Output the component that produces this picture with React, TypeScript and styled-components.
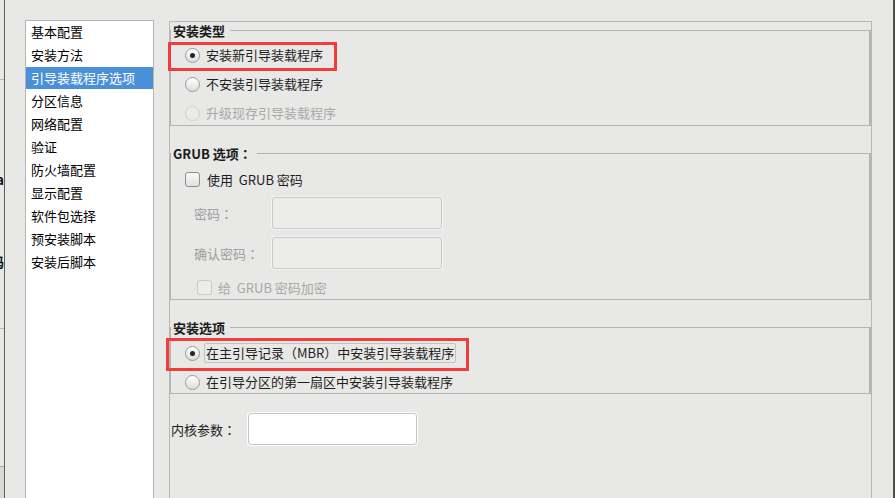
import React from "react";
import styled, { createGlobalStyle, css } from "styled-components";

type Mark = { left: number; top: number; width: number; height: number };

const GlobalStyle = createGlobalStyle`
  html, body {
    margin: 0;
    padding: 0;
  }
  body {
    background: #e8e8e7;
    font-family: "Noto Sans CJK SC", "DejaVu Sans", sans-serif;
    font-size: 13px;
    color: #1e1e1e;
    overflow: hidden;
  }
`;

const Page = styled.div`
  display: flex;
  width: 895px;
  height: 498px;
  box-sizing: border-box;
  border-right: 2px solid #4f4f4f;
  background: #e8e8e7;
`;

/* sliver of the window behind, at the far left */
const Strip = styled.div`
  width: 4px;
  flex: none;
  border-right: 1px solid #5e5e5e;
  overflow: hidden;
  display: flex;
  flex-direction: column;
`;

const StripRule = styled.div<{ $top: number }>`
  margin-top: ${(p) => p.$top}px;
  border-top: 1px solid #b9b9b9;
`;

const StripGlyph = styled.div<{ $top: number }>`
  margin-top: ${(p) => p.$top}px;
  height: 14px;
  line-height: 14px;
  display: flex;
  justify-content: flex-end;
  font-weight: bold;
  color: #111;
  white-space: nowrap;
`;

const StripBlock = styled.div<{ $top: number }>`
  margin-top: ${(p) => p.$top}px;
  flex: 1;
  background: #d9d9d8;
  border-top: 1px solid #aaaaaa;
`;

const NavList = styled.ul`
  list-style: none;
  margin: 20px 0 0 20px;
  padding: 0;
  width: 129px;
  flex: none;
  box-sizing: border-box;
  background: #fff;
  border: 1px solid #b4b4b4;
  border-bottom: none;
  color: #000;
`;

const NavItem = styled.li<{ $active?: boolean }>`
  height: 22px;
  line-height: 22px;
  margin-bottom: 1px;
  padding-left: 5px;
  white-space: nowrap;
  ${(p) =>
    p.$active &&
    css`
      background: #4a90d9;
      color: #fff;
    `}
`;

const Main = styled.main`
  flex: 1;
  min-width: 0;
  display: flex;
  flex-direction: column;
`;

const Viewport = styled.div`
  flex: 1;
  margin: 21px 21px 0 15px;
  border: 1px solid #b8b8b8;
  border-bottom: none;
  display: flex;
  flex-direction: column;
`;

const Group = styled.fieldset<{ $gap?: number }>`
  margin: ${(p) => p.$gap ?? 0}px 0 0;
  padding: 0;
  min-inline-size: 0;
  border: 1px solid #b3b3b3;
  border-right-width: 2px;
`;

const GroupTitle = styled.legend`
  padding: 0 5px 0 2px;
  font-weight: bold;
  line-height: 17px;
  color: #1a1a1a;
  white-space: nowrap;
`;

const GroupBody = styled.div<{ $top: number; $bottom: number; $gap: number }>`
  display: flex;
  flex-direction: column;
  align-items: flex-start;
  gap: ${(p) => p.$gap}px;
  padding: ${(p) => p.$top}px 0 ${(p) => p.$bottom}px 14px;
`;

/* full-width colon, centred in its cell as the reference draws it */
const Colon = styled.span`
  font-family: "Noto Sans CJK TC", "Noto Sans CJK SC", sans-serif;
`;

const Option = styled.div<{ $disabled?: boolean; $mark?: Mark }>`
  position: relative;
  display: flex;
  align-items: center;
  height: 20px;
  white-space: nowrap;
  color: ${(p) => (p.$disabled ? "#a8a8a8" : "#1e1e1e")};
  ${(p) =>
    p.$mark &&
    css`
      &::after {
        content: "";
        position: absolute;
        left: ${p.$mark.left}px;
        top: ${p.$mark.top}px;
        width: ${p.$mark.width}px;
        height: ${p.$mark.height}px;
        box-sizing: border-box;
        border: 3px solid #f03c3c;
        pointer-events: none;
      }
    `}
`;

const RadioDot = styled.span<{ $checked?: boolean; $disabled?: boolean }>`
  width: 15px;
  height: 15px;
  flex: none;
  box-sizing: border-box;
  border-radius: 50%;
  border: 1px solid ${(p) => (p.$disabled ? "#d0d0d0" : "#9a9a9a")};
  background: ${(p) =>
    p.$disabled ? "#ebebea" : "linear-gradient(#ffffff, #dcdcdc)"};
  display: flex;
  align-items: center;
  justify-content: center;
  &::after {
    content: "";
    width: 5px;
    height: 5px;
    border-radius: 50%;
    background: #262626;
    display: ${(p) => (p.$checked ? "block" : "none")};
  }
`;

const OptionText = styled.span<{ $focus?: boolean }>`
  margin-left: 6px;
  line-height: 18px;
  ${(p) =>
    p.$focus &&
    css`
      margin-left: 4px;
      padding: 0 1px;
      border: 1px solid #c2c2c2;
      border-radius: 2px;
    `}
`;

const CheckRow = styled.div<{ $disabled?: boolean; $indent?: number }>`
  display: flex;
  align-items: center;
  height: 20px;
  margin-left: ${(p) => p.$indent ?? 0}px;
  white-space: pre;
  color: ${(p) => (p.$disabled ? "#a8a8a8" : "#1e1e1e")};
`;

const CheckBox = styled.span<{ $disabled?: boolean }>`
  width: 15px;
  height: 15px;
  flex: none;
  box-sizing: border-box;
  border-radius: 3px;
  border: 1px solid ${(p) => (p.$disabled ? "#cacaca" : "#8e8e8e")};
  background: ${(p) =>
    p.$disabled ? "#ececeb" : "linear-gradient(#fbfbfb, #e0e0e0)"};
`;

const CheckText = styled.span<{ $disabled?: boolean }>`
  margin-left: ${(p) => (p.$disabled ? 6 : 7)}px;
`;

const Field = styled.div`
  display: flex;
  align-items: center;
  margin-left: 9px;
`;

const FieldLabel = styled.span<{ $disabled?: boolean; $width: number }>`
  width: ${(p) => p.$width}px;
  flex: none;
  white-space: nowrap;
  color: ${(p) => (p.$disabled ? "#9d9d9d" : "#1e1e1e")};
`;

const TextBox = styled.input<{ $width: number }>`
  appearance: none;
  width: ${(p) => p.$width}px;
  height: 32px;
  margin: 0;
  padding: 0 6px;
  box-sizing: border-box;
  border: 1px solid #c4c4c4;
  border-radius: 3px;
  background: #fff;
  box-shadow: 0 0 0 1px #fdfdfd;
  font: inherit;
  outline: none;
  &:disabled {
    background: #ececeb;
    border-color: #c9c9c9;
    box-shadow: 0 0 0 1px #f3f3f3;
  }
`;

const KernelRow = styled.div`
  display: flex;
  align-items: center;
  margin-top: 19px;
  padding-left: 1px;
`;

const navItems = [
  "基本配置",
  "安装方法",
  "引导装载程序选项",
  "分区信息",
  "网络配置",
  "验证",
  "防火墙配置",
  "显示配置",
  "软件包选择",
  "预安装脚本",
  "安装后脚本",
];

export default function App() {
  return (
    <>
      <GlobalStyle />
      <Page>
        <Strip>
          <StripRule $top={79} />
          <StripGlyph $top={93}>a</StripGlyph>
          <StripGlyph $top={68}>码</StripGlyph>
          <StripRule $top={59} />
          <StripBlock $top={137} />
        </Strip>

        <NavList>
          {navItems.map((item, i) => (
            <NavItem key={item} $active={i === 2}>
              {item}
            </NavItem>
          ))}
        </NavList>

        <Main>
          <Viewport>
            <Group>
              <GroupTitle>安装类型</GroupTitle>
              <GroupBody $top={6} $bottom={2} $gap={9}>
                <Option $mark={{ left: -17, top: -3, width: 169, height: 29 }}>
                  <RadioDot $checked />
                  <OptionText>安装新引导装载程序</OptionText>
                </Option>
                <Option>
                  <RadioDot />
                  <OptionText>不安装引导装载程序</OptionText>
                </Option>
                <Option $disabled>
                  <RadioDot $disabled />
                  <OptionText>升级现存引导装载程序</OptionText>
                </Option>
              </GroupBody>
            </Group>

            <Group $gap={19}>
              <GroupTitle>
                GRUB 选项<Colon>：</Colon>
              </GroupTitle>
              <GroupBody $top={7} $bottom={2} $gap={8}>
                <CheckRow>
                  <CheckBox />
                  <CheckText>{"使用  GRUB 密码"}</CheckText>
                </CheckRow>
                <Field>
                  <FieldLabel $disabled $width={78}>
                    密码<Colon>：</Colon>
                  </FieldLabel>
                  <TextBox type="password" disabled $width={170} />
                </Field>
                <Field>
                  <FieldLabel $disabled $width={78}>
                    确认密码<Colon>：</Colon>
                  </FieldLabel>
                  <TextBox type="password" disabled $width={170} />
                </Field>
                <CheckRow $disabled $indent={12}>
                  <CheckBox $disabled />
                  <CheckText $disabled>{"给  GRUB 密码加密"}</CheckText>
                </CheckRow>
              </GroupBody>
            </Group>

            <Group $gap={19}>
              <GroupTitle>安装选项</GroupTitle>
              <GroupBody $top={7} $bottom={1} $gap={9}>
                <Option $mark={{ left: -19, top: -5, width: 303, height: 33 }}>
                  <RadioDot $checked />
                  <OptionText $focus>在主引导记录（MBR）中安装引导装载程序</OptionText>
                </Option>
                <Option>
                  <RadioDot />
                  <OptionText>在引导分区的第一扇区中安装引导装载程序</OptionText>
                </Option>
              </GroupBody>
            </Group>

            <KernelRow>
              <FieldLabel $width={77}>
                内核参数<Colon>：</Colon>
              </FieldLabel>
              <TextBox type="text" $width={169} />
            </KernelRow>
          </Viewport>
        </Main>
      </Page>
    </>
  );
}
